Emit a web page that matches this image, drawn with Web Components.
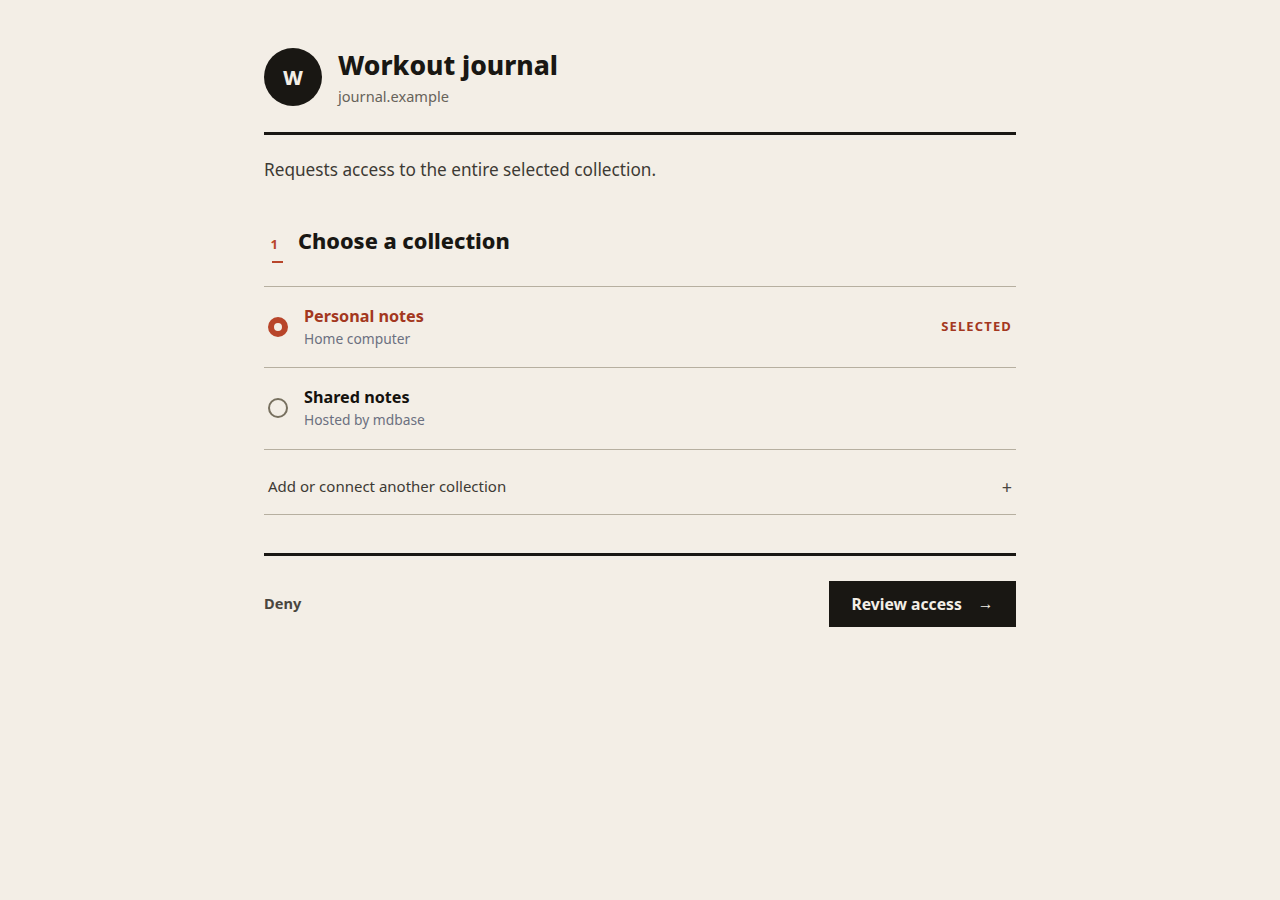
<!DOCTYPE html>
<html lang="en">
<head>
<meta charset="utf-8">
<title>Workout journal</title>
<style>
  html, body { margin: 0; background: #f3eee6; }
  body { font-family: "Noto Sans", "Liberation Sans", sans-serif; color: #191713; }
</style>
</head>
<body>
<consent-page>
  <app-header name="Workout journal" domain="journal.example" letter="W"></app-header>
  <intro-text>Requests access to the entire selected collection.</intro-text>
  <step-heading number="1">Choose a collection</step-heading>
  <collection-option heading="Personal notes" detail="Home computer" selected></collection-option>
  <collection-option heading="Shared notes" detail="Hosted by mdbase"></collection-option>
  <add-row>Add or connect another collection</add-row>
  <action-bar></action-bar>
</consent-page>

<script>
class ConsentPage extends HTMLElement {
  constructor() {
    super();
    this.attachShadow({ mode: "open" });
    this.shadowRoot.innerHTML = `
      <style>
        :host { display: block; width: 752px; margin: 0 auto; padding-top: 48px; }
      </style>
      <slot></slot>
    `;
  }
}

class AppHeader extends HTMLElement {
  constructor() {
    super();
    this.attachShadow({ mode: "open" });
  }
  connectedCallback() {
    this.shadowRoot.innerHTML = `
      <style>
        :host { display: flex; align-items: flex-start; gap: 16px; height: 58px; padding-bottom: 26px; border-bottom: 3px solid #191713; }
        .avatar {
          width: 58px; height: 58px; border-radius: 50%; background: #191713; color: #f3eee6;
          display: flex; align-items: center; justify-content: center; font-size: 20px; font-weight: 800;
        }
        h1 { margin: 0; font-size: 26.4px; line-height: 34px; font-weight: 800; }
        .domain { font-size: 14.6px; line-height: 22px; margin-top: 3px; color: #67635a; }
      </style>
      <div class="avatar">${this.getAttribute("letter")}</div>
      <div>
        <h1>${this.getAttribute("name")}</h1>
        <div class="domain">${this.getAttribute("domain")}</div>
      </div>
    `;
  }
}

class IntroText extends HTMLElement {
  constructor() {
    super();
    this.attachShadow({ mode: "open" });
    this.shadowRoot.innerHTML = `
      <style>
        :host { display: block; margin: 24px 0 46px; font-size: 17.2px; line-height: 22px; color: #3d3a34; }
      </style>
      <slot></slot>
    `;
  }
}

class StepHeading extends HTMLElement {
  constructor() {
    super();
    this.attachShadow({ mode: "open" });
  }
  connectedCallback() {
    this.shadowRoot.innerHTML = `
      <style>
        :host { display: flex; gap: 20.5px; height: 59px; padding-left: 6.5px; border-bottom: 1px solid #b6afa0; }
        .num { width: 7px; color: #b8452a; font-size: 13px; font-weight: 700; line-height: 16px; padding-top: 9px; }
        .num::after { content: ""; display: block; width: 11px; height: 2px; background: #b8452a; margin-top: 9px; margin-left: 1.5px; }
        h2 { margin: 0; font-size: 21.7px; line-height: 28px; font-weight: 800; }
      </style>
      <div class="num">${this.getAttribute("number")}</div>
      <h2><slot></slot></h2>
    `;
  }
}

class CollectionOption extends HTMLElement {
  constructor() {
    super();
    this.attachShadow({ mode: "open" });
  }
  connectedCallback() {
    const selected = this.hasAttribute("selected");
    this.shadowRoot.innerHTML = `
      <style>
        :host { display: flex; align-items: center; gap: 16px; height: 80.3px; padding: 0 4px; border-bottom: 1px solid #b6afa0; }
        .radio { width: 20px; height: 20px; flex: none; box-sizing: border-box; border-radius: 50%; border: 2px solid #77705f; }
        .radio.on { border: 6px solid #b8452a; background: #f3eee6; }
        .text { flex: 1; }
        .name { font-size: 16.2px; line-height: 22px; font-weight: 700; color: ${selected ? "#a33720" : "#14120e"}; }
        .detail { font-size: 13.8px; line-height: 20px; margin-top: 2px; color: #6b7080; }
        .badge { font-size: 13px; font-weight: 700; letter-spacing: 1.15px; padding-bottom: 2px; color: #a33720; }
      </style>
      <span class="radio ${selected ? "on" : ""}"></span>
      <div class="text">
        <div class="name">${this.getAttribute("heading")}</div>
        <div class="detail">${this.getAttribute("detail")}</div>
      </div>
      ${selected ? `<span class="badge">SELECTED</span>` : ""}
    `;
  }
}

class AddRow extends HTMLElement {
  constructor() {
    super();
    this.attachShadow({ mode: "open" });
    this.shadowRoot.innerHTML = `
      <style>
        :host { display: flex; justify-content: space-between; align-items: center; box-sizing: border-box; height: 65px; padding: 9px 4px 0; border-bottom: 1px solid #b6afa0; font-size: 15px; color: #3d3a34; }
        .plus { font-size: 18px; padding-top: 1px; color: #4a463f; }
      </style>
      <span><slot></slot></span>
      <span class="plus">+</span>
    `;
  }
}

class ActionBar extends HTMLElement {
  constructor() {
    super();
    this.attachShadow({ mode: "open" });
    this.shadowRoot.innerHTML = `
      <style>
        :host { display: flex; justify-content: space-between; align-items: center; margin-top: 38px; padding-top: 25px; border-top: 3px solid #191713; }
        .deny { font-size: 14.6px; font-weight: 700; padding-bottom: 2px; color: #4a463f; }
        .review {
          display: flex; align-items: center; gap: 16px; height: 46px; width: 187px; box-sizing: border-box;
          justify-content: center; background: #191713; color: #f3eee6; font-size: 15.7px; font-weight: 700;
        }
        .arrow { padding-bottom: 2px; }
      </style>
      <span class="deny">Deny</span>
      <span class="review"><span>Review access</span><span class="arrow">→</span></span>
    `;
  }
}

customElements.define("app-header", AppHeader);
customElements.define("intro-text", IntroText);
customElements.define("step-heading", StepHeading);
customElements.define("collection-option", CollectionOption);
customElements.define("add-row", AddRow);
customElements.define("action-bar", ActionBar);
customElements.define("consent-page", ConsentPage);
</script>
</body>
</html>
